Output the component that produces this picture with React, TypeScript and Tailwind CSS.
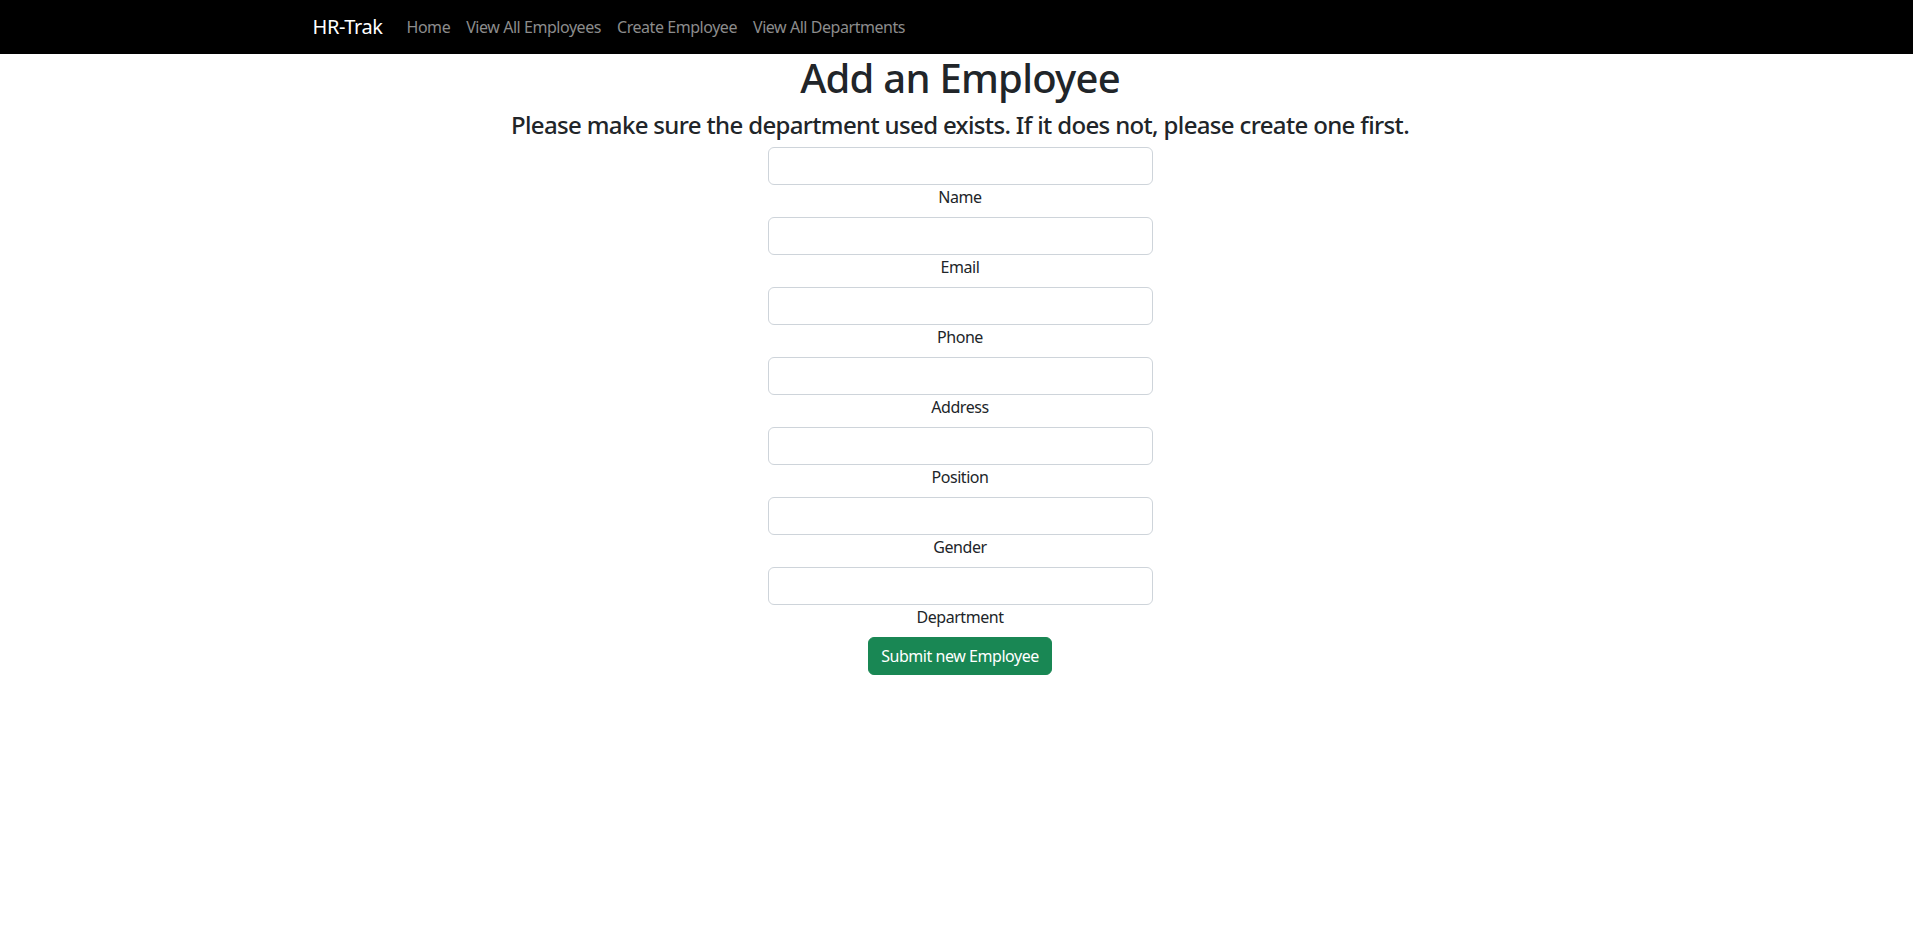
import { FC } from 'react'

const links = ['Home', 'View All Employees', 'Create Employee', 'View All Departments']
const fields = ['Name', 'Email', 'Phone', 'Address', 'Position', 'Gender', 'Department']

const App: FC = () => {
  return (
    <div className="min-h-screen bg-white text-[#212529] font-['Segoe_UI','Noto_Sans',sans-serif] tracking-[-0.45px]">
      {/* navbar */}
      <nav className="h-[54px] bg-black">
        <div className="mx-auto flex h-full max-w-[1320px] items-center px-3">
          <a href="#" className="ml-1 mr-4 text-[20px] leading-[30px] tracking-[-0.4px] text-white">
            HR-Trak
          </a>
          <ul className="flex items-center">
            {links.map((l) => (
              <li key={l}>
                <a href="#" className="block px-2 text-base leading-6 text-[#8c8c8c]">
                  {l}
                </a>
              </li>
            ))}
          </ul>
        </div>
      </nav>

      {/* form */}
      <main className="flex flex-col items-center pl-[7px] text-center">
        <h1 className="mb-2 text-[40px] font-medium leading-[48px] tracking-[-0.75px]">Add an Employee</h1>
        <h4 className="mb-2 text-[24px] font-medium leading-[29px] tracking-[-0.65px]">
          Please make sure the department used exists. If it does not, please create one first.
        </h4>
        <form className="flex w-[385px] flex-col items-center">
          {fields.map((f) => (
            <div key={f} className="flex w-full flex-col items-center">
              <input
                type="text"
                className="h-[38px] w-full rounded-[6px] border border-[#ced4da] px-3 text-base outline-none"
              />
              <label className="mb-2 text-base leading-6">{f}</label>
            </div>
          ))}
          <button
            type="button"
            className="h-[38px] rounded-[6px] border border-[#198754] bg-[#198754] px-3 text-base text-white"
          >
            Submit new Employee
          </button>
        </form>
      </main>
    </div>
  )
}

export default App
